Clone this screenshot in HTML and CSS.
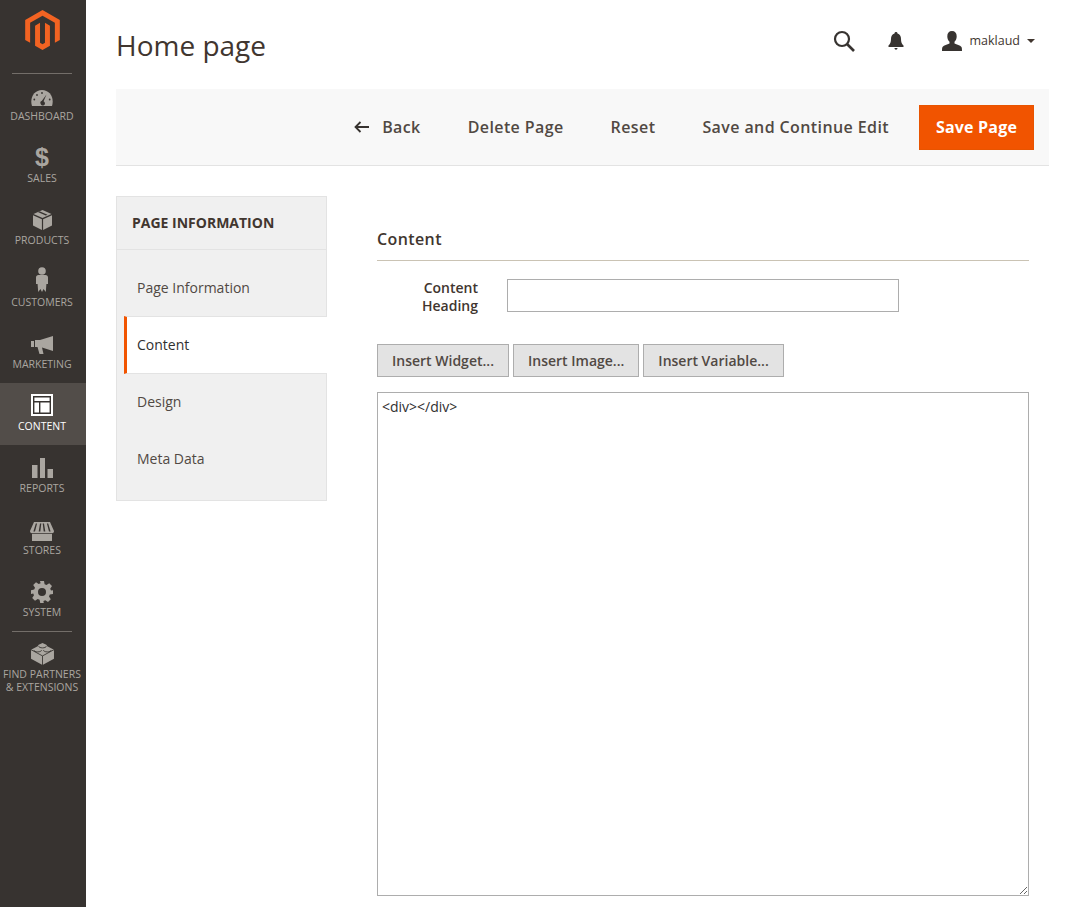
FILE: index.html
```html
<!DOCTYPE html>
<html lang="en">
<head>
    <meta charset="UTF-8">
    <meta name="viewport" content="width=device-width, initial-scale=1.0">
    <title>Home page - Pages</title>
    <link rel="stylesheet" href="styles.css">
</head>
<body>

<div class="wrapper">

    <!-- Left admin menu -->
    <nav class="sidebar">
        <div class="logo">
            <svg width="35" height="40" viewBox="1.609 0 20.782 24">
                <path fill="#f26322" d="M12 24l-4.455-2.572v-12l2.970-1.715v12.001l1.485.902 1.485-.902V7.713l2.970 1.715v12L12 24zM22.391 6v12l-2.970 1.714V7.713L12 3.430 4.574 7.713v12.001L1.609 18V6L12 0l10.391 6z"/>
            </svg>
        </div>
        <ul class="menu">
            <li class="menu-item">
                <svg class="menu-icon" width="22" height="16" viewBox="0 0 22 16"><path fill="#aaa6a0" d="M11 0C4.800 0 .3 5 .3 11.500c0 1.700.2 3 .7 4.500h20c.5-1.500.7-2.800.7-4.500C21.700 5 17.200 0 11 0z"/><path fill="#373330" d="M15.500 4.500 12.600 11.300a2.200 2.200 0 1 1-3 2.500 2.200 2.200 0 0 1 1.300-3z"/><circle cx="11" cy="3" r=".9" fill="#373330"/><circle cx="6" cy="5" r=".9" fill="#373330"/><circle cx="3.300" cy="9.500" r=".9" fill="#373330"/><circle cx="18.700" cy="9.500" r=".9" fill="#373330"/></svg>
                <span>DASHBOARD</span>
            </li>
            <li class="menu-item">
                <span class="dollar">$</span>
                <span>SALES</span>
            </li>
            <li class="menu-item">
                <svg class="menu-icon" width="19" height="20" viewBox="0 0 19 20"><path fill="#aaa6a0" d="M9.500 0 18.500 4 9.500 8 .5 4zM0 5.200 8.900 9.200V20L0 15.500zM19 5.200 10.100 9.200V20L19 15.500z"/><path fill="#373330" d="M4.800 2 6.500 1.200l8 3.600-1.700.8z"/></svg>
                <span>PRODUCTS</span>
            </li>
            <li class="menu-item">
                <svg class="menu-icon" width="12" height="25" viewBox="0 0 12 25"><circle cx="6" cy="4" r="3.800" fill="#aaa6a0"/><path fill="#aaa6a0" d="M2.500 8h7C11 8 12 9 12 10.500V17h-1.600l-.6 8-2.300-3L6 25l-1.500-3-2.300 3-.6-8H0v-6.500C0 9 1 8 2.500 8z"/></svg>
                <span>CUSTOMERS</span>
            </li>
            <li class="menu-item">
                <svg class="menu-icon" width="22" height="18" viewBox="0 0 22 18"><path fill="#aaa6a0" d="M0 5h3v6H0zM4 4h5L22 0v15L11 11.500 12.500 18H8.500L6.500 11H4z"/></svg>
                <span>MARKETING</span>
            </li>
            <li class="menu-item active">
                <svg class="menu-icon" width="22" height="22" viewBox="0 0 22 22"><path fill="#fff" d="M0 0h22v22H0z"/><path fill="none" stroke="#373330" stroke-width="1.400" d="M2.700 2.700h16.600v16.600H2.700zM2.700 7.700h16.600M8.700 7.700v11.600"/></svg>
                <span>CONTENT</span>
            </li>
            <li class="menu-item">
                <svg class="menu-icon" width="21" height="20" viewBox="0 0 21 20"><path fill="#aaa6a0" d="M0 7h5.500v13H0zM8 0h5v20H8zM15.500 11H21v9h-5.500z"/></svg>
                <span>REPORTS</span>
            </li>
            <li class="menu-item">
                <svg class="menu-icon tight" width="24" height="19" viewBox="0 0 24 19"><path fill="#aaa6a0" d="M4 0h16l4 9c0 1.500-1 2.200-2 2.200H2c-1 0-2-.7-2-2.200zM2 12h20v7H2z"/><path fill="#373330" d="M5.800 1.500h1.300L5 9.500H3.400zM10 1.500h1.300L10.300 9.500H8.700zM12.700 1.500H14l1.300 8h-1.600zM16.900 1.500h1.300l2.400 8H19z"/></svg>
                <span>STORES</span>
            </li>
            <li class="menu-item">
                <svg class="menu-icon tight" width="22" height="22" viewBox="0 0 22 22"><path fill="#aaa6a0" fill-rule="evenodd" d="M9 0h4l.6 3.200 1.900.8 2.700-1.800 2.800 2.800-1.800 2.700.8 1.900L22 9.200v3.800l-3.200.6-.8 1.900 1.800 2.700-2.800 2.800-2.700-1.800-1.900.8L12.800 22H9.200l-.6-3.200-1.900-.8L4 19.800 1.200 17l1.800-2.700-.8-1.900L0 13V9.200l3.200-.6.800-1.900L2.200 4 5 1.200 7.700 3l1.900-.8zM11 7a4 4 0 1 0 0 8 4 4 0 0 0 0-8z"/></svg>
                <span>SYSTEM</span>
            </li>
            <li class="menu-item partners">
                <svg class="menu-icon tight" width="23" height="22" viewBox="0 0 24 23"><path fill="#aaa6a0" d="M12 0l4 1.800 1 1.500 7 3.700v9.500L12 23 0 16.500V7l7-3.700 1-1.500z"/><path fill="none" stroke="#373330" stroke-width=".9" d="M0 7l12 6.500L24 7M12 13.500V23M8 3.300c0 1 1.800 1.800 4 1.800s4-.8 4-1.800M3 7.500c0 1 1.800 1.800 4 1.800s4-.8 4-1.800M13 7.500c0 1 1.800 1.800 4 1.800s4-.8 4-1.800"/></svg>
                <span>FIND PARTNERS<br>&amp; EXTENSIONS</span>
            </li>
        </ul>
    </nav>

    <div class="main">

        <header class="page-header">
            <h1>Home page</h1>
            <div class="header-tools">
                <svg class="tool-search" width="22" height="22" viewBox="0 0 22 22"><circle cx="9" cy="9" r="7" fill="none" stroke="#373330" stroke-width="2.200"/><path stroke="#373330" stroke-width="2.600" d="M14 14l7 7"/></svg>
                <svg class="tool-bell" width="16" height="18" viewBox="0 0 16 18"><path fill="#373330" d="M8 0c.9 0 1.500.6 1.500 1.400 2.400.7 3.500 2.700 3.500 5.300 0 3.300.7 5 2.500 6.800V15H.500v-1.500C2.300 11.700 3 10 3 6.700 3 4.100 4.100 2.100 6.500 1.400 6.500.6 7.100 0 8 0zM6.500 16h3c0 1-.7 1.700-1.500 1.700S6.500 17 6.500 16z"/></svg>
                <div class="user">
                    <svg width="20" height="20" viewBox="0 0 20 20"><path fill="#373330" d="M10 0c3 0 4.700 2 4.700 5.200 0 2.500-.9 4.300-2.200 5.600v1.700c2.300 1 5.500 1.600 7 3.500.4.800.5 2.200.5 4H0c0-1.800.1-3.200.5-4 1.500-1.900 4.700-2.500 7-3.500v-1.700C6.200 9.500 5.300 7.700 5.300 5.200 5.300 2 7 0 10 0z"/></svg>
                    <span class="user-name">maklaud</span>
                    <span class="caret"></span>
                </div>
            </div>
        </header>

        <!-- Buttons -->
        <div class="actions">
            <a class="action back">
                <svg width="15" height="12" viewBox="0 0 15 12"><path fill="none" stroke="#373330" stroke-width="1.800" d="M15 6H2M6.500 1 1.500 6l5 5"/></svg>
                Back
            </a>
            <a class="action">Delete Page</a>
            <a class="action">Reset</a>
            <a class="action">Save and Continue Edit</a>
            <button class="save" type="button">Save Page</button>
        </div>

        <div class="columns">
            <aside class="tabs">
                <div class="tabs-title">PAGE INFORMATION</div>
                <ul class="tab-list">
                    <li class="tab">Page Information</li>
                    <li class="tab current">Content</li>
                    <li class="tab">Design</li>
                    <li class="tab">Meta Data</li>
                </ul>
            </aside>

            <section class="content">
                <h2>Content</h2>
                <div class="field">
                    <label for="heading">Content Heading</label>
                    <input type="text" id="heading">
                </div>
                <div class="editor-buttons">
                    <button type="button">Insert Widget...</button>
                    <button type="button">Insert Image...</button>
                    <button type="button">Insert Variable...</button>
                </div>
                <textarea class="editor">&lt;div&gt;&lt;/div&gt;</textarea>
            </section>
        </div>
    </div>
</div>

</body>
</html>
```

FILE: styles.css
```css
* {
    box-sizing: border-box;
}
html, body {
    height: 100%;
    overflow: hidden;
}
body {
    font-family: "Open Sans", sans-serif;
    font-size: 14px;
    margin: 0;
    color: #41362f;
    background-color: white;
}
ul {
    list-style: none;
    margin: 0;
    padding: 0;
}
.wrapper {
    display: flex;
    height: 100%;
}

/* sidebar */
.sidebar {
    width: 86px;
    flex-shrink: 0;
    background-color: #373330;
}
.logo {
    height: 73px;
    padding: 10px 1px 0 0;
    display: flex;
    justify-content: center;
    align-items: flex-start;
}
.menu-item {
    height: 62px;
    display: flex;
    flex-direction: column;
    align-items: center;
    justify-content: flex-end;
    padding: 0 2px 12px 0;
    font-size: 10.5px;
    line-height: 13px;
    color: #aaa6a0;
    text-align: center;
    white-space: nowrap;
}
.menu-item:first-child,
.menu-item.partners {
    background-image: linear-gradient(#736e69, #736e69);
    background-size: 60px 1px;
    background-repeat: no-repeat;
    background-position: 12px 0;
}
.menu-item.partners {
    height: 70px;
    padding-bottom: 0;
    justify-content: flex-start;
    padding-top: 12px;
}
.menu-item.active {
    background-color: #524d49;
    color: white;
}
.menu-icon {
    margin-bottom: 4px;
    display: block;
}
.menu-icon.tight {
    margin-bottom: 3px;
}
.dollar {
    font-family: "Liberation Sans", sans-serif;
    font-weight: bold;
    font-size: 25px;
    line-height: 24px;
    margin-bottom: 3px;
}

/* header */
.main {
    flex: 1;
    padding: 0 26px 0 30px;
    min-width: 0;
}
.page-header {
    height: 89px;
    display: flex;
    justify-content: space-between;
    align-items: flex-start;
}
h1 {
    margin: 26px 0 0;
    font-size: 28px;
    font-weight: 400;
    line-height: 38px;
    color: #41362f;
}
.header-tools {
    display: flex;
    align-items: center;
    margin-top: 30px;
    padding-right: 14px;
}
.tool-bell {
    margin-left: 33px;
}
.user {
    display: flex;
    align-items: center;
    margin-left: 38px;
}
.user-name {
    font-size: 12.5px;
    margin: 0 0 2px 7px;
}
.caret {
    margin-left: 7px;
    border-top: 4.5px solid #41362f;
    border-left: 4px solid transparent;
    border-right: 4px solid transparent;
}

/* action bar */
.actions {
    height: 77px;
    display: flex;
    justify-content: flex-end;
    align-items: center;
    gap: 47px;
    padding-right: 15px;
    background-color: #f8f8f8;
    border-bottom: 1px solid #e3e3e3;
}
.action {
    font-size: 16px;
    font-weight: 600;
    letter-spacing: .4px;
    color: #514943;
}
.back svg {
    margin-right: 9px;
}
.save {
    height: 45px;
    width: 115px;
    margin-left: -17px;
    padding: 0;
    border: 1px solid #e85400;
    background-color: #f15400;
    color: white;
    font-family: inherit;
    font-size: 16px;
    font-weight: 700;
    letter-spacing: .2px;
}

/* columns */
.columns {
    display: flex;
    padding-top: 30px;
}
.tabs {
    width: 211px;
    flex-shrink: 0;
    margin-right: 50px;
    align-self: flex-start;
    background-color: #f0f0f0;
    border: 1px solid #e3e3e3;
}
.tabs-title {
    height: 53px;
    padding: 0 15px;
    line-height: 52px;
    font-size: 14px;
    font-weight: 700;
    color: #41362f;
    border-bottom: 1px solid #e3e3e3;
}
.tab-list {
    padding: 10px 0 12px;
}
.tab {
    height: 57px;
    padding-left: 20px;
    line-height: 55px;
    color: #514943;
}
.tab.current {
    height: 58px;
    margin: -1px -1px 0 7px;
    padding-left: 10px;
    line-height: 56px;
    background-color: white;
    border-left: 3px solid #f15400;
    border-bottom: 1px solid #e3e3e3;
    border-top: 1px solid #e3e3e3;
    color: #303030;
}

/* content */
.content {
    flex: 1;
    min-width: 0;
    padding-top: 30px;
    padding-right: 20px;
}
h2 {
    margin: 0;
    height: 35px;
    font-size: 16px;
    font-weight: 600;
    letter-spacing: .4px;
    line-height: 26px;
    color: #41362f;
    border-bottom: 1px solid #cac3b4;
}
.field {
    display: flex;
    align-items: flex-start;
    margin-top: 18px;
}
.field label {
    width: 101px;
    text-align: right;
    font-weight: 600;
    line-height: 18px;
    color: #41362f;
}
.field input {
    width: 392px;
    height: 33px;
    margin-left: 29px;
    border: 1px solid #adadad;
    background-color: white;
}
.editor-buttons {
    display: flex;
    gap: 4px;
    margin-top: 29px;
}
.editor-buttons button {
    height: 33px;
    padding: 0 14px;
    background-color: #e3e3e3;
    border: 1px solid #adadad;
    font-family: inherit;
    font-size: 14px;
    font-weight: 600;
    color: #514943;
}
.editor {
    display: block;
    width: 652px;
    height: 504px;
    margin-top: 15px;
    padding: 4px;
    border: 1px solid #adadad;
    font-family: "Open Sans", sans-serif;
    font-size: 14px;
    color: #303030;
}
```
